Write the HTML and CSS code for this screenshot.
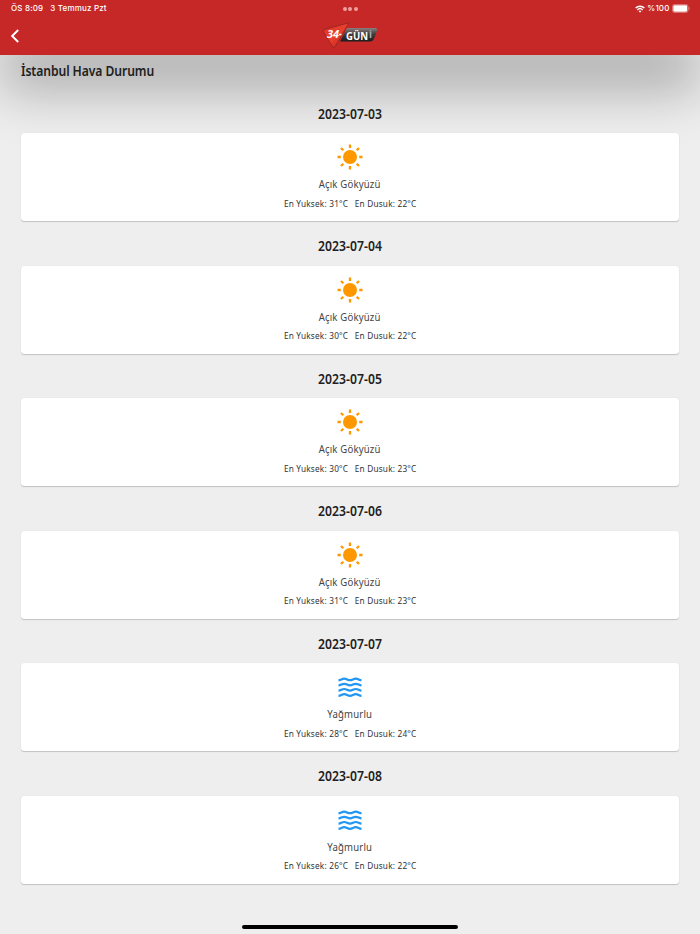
FILE: index.html
```html
<!DOCTYPE html>
<html lang="tr">
<head>
  <meta charset="UTF-8" />
  <meta name="viewport" content="width=device-width, initial-scale=1.0"/>
  <title>İstanbul Hava Durumu</title>
  <link rel="stylesheet" href="styles.css">
</head>
<body>
  <!-- shared shapes -->
  <svg class="symbols" width="0" height="0">
    <symbol id="sun" viewBox="0 0 28 28">
      <circle cx="14" cy="14" r="7" fill="#ff9800"/>
      <path d="M14 1.500v3.600M14 22.900v3.600M1.500 14h3.300M23.200 14h3.300M5 5l2.300 2.300M20.700 20.700L23 23M5 23l2.300-2.300M20.700 7.300L23 5" stroke="#ff9800" stroke-width="2.300" fill="none"/>
    </symbol>
    <symbol id="waves" viewBox="0 0 28 28">
      <g stroke="#2196f3" stroke-width="2.200" fill="none">
        <path d="M2.500 7.200c2.500 0 3.200-1.600 5.700-1.600s3.300 1.600 5.800 1.600 3.300-1.600 5.800-1.600 3.200 1.600 5.700 1.600"/>
        <path d="M2.500 12.400c2.500 0 3.200-1.600 5.700-1.600s3.300 1.600 5.800 1.600 3.300-1.600 5.800-1.600 3.200 1.600 5.700 1.600"/>
        <path d="M2.500 17.600c2.500 0 3.200-1.600 5.700-1.600s3.300 1.600 5.800 1.600 3.300-1.600 5.800-1.600 3.200 1.600 5.700 1.600"/>
        <path d="M2.500 22.800c2.500 0 3.200-1.600 5.700-1.600s3.300 1.600 5.800 1.600 3.300-1.600 5.800-1.600 3.200 1.600 5.700 1.600"/>
      </g>
    </symbol>
  </svg>

  <header class="header">
    <div class="status">
      <div class="status-left"><span>ÖS 8:09</span><span>3 Temmuz Pzt</span></div>
      <div class="dots"><i></i><i></i><i></i></div>
      <div class="status-right">
        <svg width="10" height="8" viewBox="0 0 10 8" fill="none" stroke="#fff" stroke-width="1.4">
          <path d="M.6 3.100a6.300 6.300 0 0 1 8.800 0M2.300 4.900a3.900 3.900 0 0 1 5.400 0"/>
          <path d="M5 7.600L3.600 6.200a2 2 0 0 1 2.800 0z" fill="#fff" stroke="none"/>
        </svg>
        <span class="percent">%100</span>
        <svg width="18" height="9" viewBox="0 0 18 9">
          <rect x=".4" y=".4" width="15.700" height="8.200" rx="2.400" fill="none" stroke="#e78b8b" stroke-width=".8"/>
          <rect x="1.300" y="1.300" width="13.900" height="6.400" rx="1.400" fill="#fff"/>
          <path d="M16.900 3v3c1-.4 1-2.600 0-3" fill="#e78b8b"/>
        </svg>
      </div>
    </div>
    <div class="bar">
      <svg class="back" width="8" height="14" viewBox="0 0 8 14"><path d="M7.200 1L1.200 7l6 6" fill="none" stroke="#fff" stroke-width="1.900"/></svg>
      <svg class="logo" width="56" height="28" viewBox="0 0 56 28">
        <defs>
          <linearGradient id="dark" x1="0" y1="0" x2="0" y2="1">
            <stop offset="0" stop-color="#8a8080"/><stop offset=".45" stop-color="#443c3c"/><stop offset="1" stop-color="#1c1c1c"/>
          </linearGradient>
          <linearGradient id="red" x1="0" y1="0" x2="1" y2="1">
            <stop offset="0" stop-color="#dc3325"/><stop offset=".5" stop-color="#e8402e"/><stop offset="1" stop-color="#b81718"/>
          </linearGradient>
        </defs>
        <path d="M25 6h28q3 0 2 3l-3 7.500q-1 3-4 3H18z" fill="url(#dark)"/>
        <path d="M2 7.500L27 .8 13 25q-1.500 2-2.500-.5L1.500 10q-.8-2 .5-2.500z" fill="url(#red)" stroke="#8c2420" stroke-width=".8"/>
        <text class="logo-number" x="5" y="15.500">34</text>
        <path d="M17 12.500h2.500" stroke="#fff" stroke-width="1.500"/>
        <text class="logo-name" x="24" y="17.500" textLength="22" lengthAdjust="spacingAndGlyphs">GÜN</text>
        <text class="logo-mark" x="47" y="16">i</text>
      </svg>
    </div>
  </header>

  <main class="content">
    <h1 class="title">İstanbul Hava Durumu</h1>

    <section class="day">
      <h2 class="date">2023-07-03</h2>
      <div class="card">
        <svg class="icon"><use href="#sun"/></svg>
        <p class="condition">Açık Gökyüzü</p>
        <p class="range"><span>En Yuksek: 31°C</span><span>En Dusuk: 22°C</span></p>
      </div>
    </section>

    <section class="day">
      <h2 class="date">2023-07-04</h2>
      <div class="card">
        <svg class="icon"><use href="#sun"/></svg>
        <p class="condition">Açık Gökyüzü</p>
        <p class="range"><span>En Yuksek: 30°C</span><span>En Dusuk: 22°C</span></p>
      </div>
    </section>

    <section class="day">
      <h2 class="date">2023-07-05</h2>
      <div class="card">
        <svg class="icon"><use href="#sun"/></svg>
        <p class="condition">Açık Gökyüzü</p>
        <p class="range"><span>En Yuksek: 30°C</span><span>En Dusuk: 23°C</span></p>
      </div>
    </section>

    <section class="day">
      <h2 class="date">2023-07-06</h2>
      <div class="card">
        <svg class="icon"><use href="#sun"/></svg>
        <p class="condition">Açık Gökyüzü</p>
        <p class="range"><span>En Yuksek: 31°C</span><span>En Dusuk: 23°C</span></p>
      </div>
    </section>

    <section class="day">
      <h2 class="date">2023-07-07</h2>
      <div class="card">
        <svg class="icon"><use href="#waves"/></svg>
        <p class="condition">Yağmurlu</p>
        <p class="range"><span>En Yuksek: 28°C</span><span>En Dusuk: 24°C</span></p>
      </div>
    </section>

    <section class="day">
      <h2 class="date">2023-07-08</h2>
      <div class="card">
        <svg class="icon"><use href="#waves"/></svg>
        <p class="condition">Yağmurlu</p>
        <p class="range"><span>En Yuksek: 26°C</span><span>En Dusuk: 22°C</span></p>
      </div>
    </section>
  </main>

  <div class="home-indicator"></div>
</body>
</html>
```
FILE: styles.css
```css
* {
  box-sizing: border-box;
  margin: 0;
  padding: 0;
}

body {
  height: 934px;
  overflow: hidden;
  position: relative;
  background: #eeeeee;
  color: #212121;
  font-family: "Noto Sans", Roboto, sans-serif;
}

.symbols {
  position: absolute;
}

.header {
  height: 55px;
  background: #c62828;
  box-shadow: 0 36px 52px rgba(0, 0, 0, 0.28);
}

.status {
  display: grid;
  grid-template-columns: 1fr auto 1fr;
  align-items: center;
  height: 17px;
  padding: 0 11px;
  color: #fff;
  font: 500 8px/17px Inter, sans-serif;
}

.status-left {
  display: flex;
  gap: 7px;
  letter-spacing: 0.17px;
}

.dots {
  display: flex;
  gap: 1.5px;
}

.dots i {
  width: 4px;
  height: 4px;
  border-radius: 50%;
  background: #f0a0a0;
}

.status-right {
  display: flex;
  justify-content: flex-end;
  align-items: center;
  gap: 2.5px;
  margin-right: -1px;
}

.percent {
  letter-spacing: 0.15px;
}

.bar {
  display: grid;
  grid-template-columns: 1fr auto 1fr;
  align-items: center;
  height: 37px;
  padding: 0 11px;
}

.logo {
  font-family: "Open Sans", sans-serif;
  font-weight: bold;
  fill: #fff;
}

.logo-number {
  font-size: 11px;
  font-style: italic;
}

.logo-name {
  font-size: 10px;
}

.logo-mark {
  font-size: 10px;
  fill: #aaa;
}

.content {
  padding: 0 21px;
}

/* condensed look */
.title,
.date,
.condition,
.range {
  transform: scaleX(0.87);
}

.title {
  height: 33.5px;
  font-size: 14px;
  line-height: 32px;
  font-weight: 600;
  letter-spacing: -0.1px;
  transform-origin: left;
}

.day {
  height: 132.5px;
  padding-top: 9px;
}

.date {
  height: 35.5px;
  font-size: 14px;
  line-height: 31px;
  font-weight: 600;
  letter-spacing: 0.05px;
  text-align: center;
}

.card {
  display: flex;
  flex-direction: column;
  align-items: center;
  height: 88px;
  padding-top: 10px;
  background: #fff;
  border-radius: 3px;
  box-shadow: 0 1px 1px rgba(0, 0, 0, 0.18), 0 0 1px rgba(0, 0, 0, 0.12);
}

.icon {
  width: 28px;
  height: 28px;
}

.condition {
  margin-top: 4px;
  font-size: 11px;
  line-height: 18px;
  letter-spacing: 0.2px;
  color: #444;
}

.range {
  display: flex;
  gap: 7.5px;
  margin-top: 1.5px;
  font-size: 9.5px;
  line-height: 18px;
  letter-spacing: 0.22px;
  color: #333;
}

.home-indicator {
  position: absolute;
  left: 242px;
  bottom: 5.5px;
  width: 216px;
  height: 4px;
  border-radius: 2px;
  background: #000;
}
```
